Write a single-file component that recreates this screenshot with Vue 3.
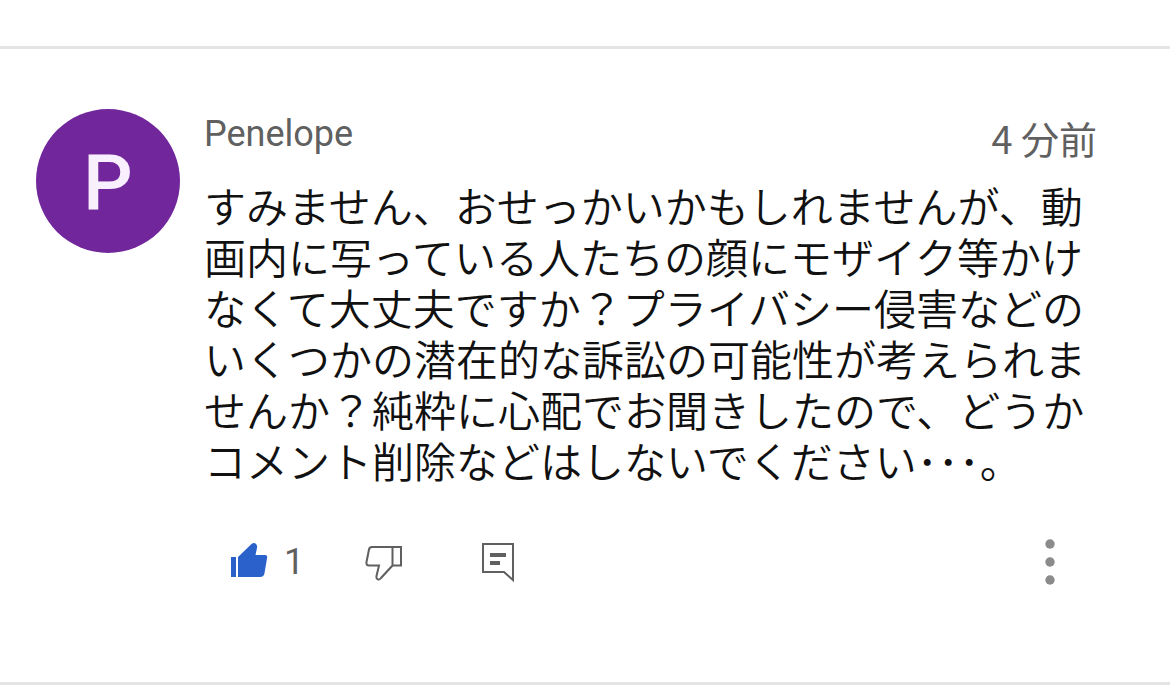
<script setup>
import { ref } from 'vue'

const liked = ref(true)
const comment = {
  author: 'Penelope',
  time: '4 分前',
  likes: 1,
  text: [
    'すみません、おせっかいかもしれませんが、動',
    '画内に写っている人たちの顔にモザイク等かけ',
    'なくて大丈夫ですか？プライバシー侵害などの',
    'いくつかの潜在的な訴訟の可能性が考えられま',
    'せんか？純粋に心配でお聞きしたので、どうか',
    'コメント削除などはしないでください･･･。',
  ].join('\n'),
}
</script>

<template>
  <main class="page">
    <article class="comment">
      <div class="avatar" aria-hidden="true">{{ comment.author[0] }}</div>
      <div class="content">
        <header class="head">
          <span class="author">{{ comment.author }}</span>
          <time class="time">{{ comment.time }}</time>
        </header>
        <p class="text">{{ comment.text }}</p>
        <div class="actions">
          <button class="btn like" type="button" aria-label="高く評価" :aria-pressed="liked" @click="liked = !liked">
            <svg width="38" height="38" viewBox="0 0 38 38" fill="#2a61cb">
              <path d="M1 14h5v20H1zM8 14L21 1.500Q24 -1 26 1Q27.500 2.500 27 5L25.500 12H35Q38 12 37 15.500L34.500 30Q34 34 30 34H8z" />
            </svg>
            <span class="count">{{ comment.likes }}</span>
          </button>
          <button class="btn dislike" type="button" aria-label="低く評価">
            <svg width="38" height="38" viewBox="0 0 38 38" fill="none" stroke="#606060" stroke-width="2">
              <path d="M27.500 4H7Q4.500 4 4 6.500L1.500 19Q1 22.500 4 22.500H14L11.500 33Q11 36 13 36.500Q14.500 37 16 35L27.500 22.500zM27.500 4H36V22.500H27.500" />
            </svg>
          </button>
          <button class="btn reply" type="button" aria-label="返信">
            <svg width="34" height="40" viewBox="0 0 34 40" fill="none" stroke="#606060" stroke-width="2">
              <path d="M2 2H32V38L23 30H2z" />
              <path d="M9 13H25M9 21H19" stroke-width="4" />
            </svg>
          </button>
          <button class="btn more" type="button" aria-label="その他">
            <svg width="10" height="46" viewBox="0 0 10 46" fill="#8b8b8b">
              <circle cx="5" cy="5" r="4.700" />
              <circle cx="5" cy="23" r="4.700" />
              <circle cx="5" cy="41" r="4.700" />
            </svg>
          </button>
        </div>
      </div>
    </article>
  </main>
</template>

<style scoped>
.page {
  padding-top: 46px;
  background: #fff;
  font-family: Roboto, "Noto Sans CJK JP", sans-serif;
}
.comment {
  display: flex;
  gap: 24px;
  padding: 60px 73px 97px 36px;
  border-top: 3px solid #e4e4e4;
  border-bottom: 3px solid #e4e4e4;
}
.avatar {
  display: flex;
  flex: none;
  align-items: center;
  justify-content: center;
  box-sizing: border-box;
  width: 144px;
  height: 144px;
  padding-top: 6px;
  border-radius: 50%;
  background: #71269b;
  color: #f8efff;
  font-size: 78px;
  font-weight: 500;
  line-height: 1;
}
.content {
  flex: 1;
  min-width: 0;
}
.head {
  display: flex;
  justify-content: space-between;
  height: 70px;
  color: #606060;
}
.author {
  font-size: 36px;
  line-height: 50px;
}
.time {
  font-family: "Noto Sans CJK JP", sans-serif;
  font-size: 38px;
  font-weight: 400;
  line-height: 58px;
}
.text {
  margin: 0;
  color: #111;
  font-family: "Noto Sans CJK JP", sans-serif;
  font-size: 42px;
  font-weight: 350;
  line-height: 51px;
  white-space: pre;
}
.actions {
  display: flex;
  align-items: center;
  height: 46px;
  margin-top: 54px;
  padding: 0 42px 0 26px;
}
.btn {
  display: flex;
  align-items: center;
  padding: 0;
  border: 0;
  background: none;
  color: #606060;
  font: inherit;
  cursor: pointer;
}
.like {
  gap: 16px;
}
.count {
  font-size: 36px;
  line-height: 48px;
}
.dislike {
  margin-left: 61px;
}
.reply {
  margin-left: 78px;
}
.more {
  margin-left: auto;
}
</style>

<style>
body {
  margin: 0;
  background: #fff;
}
</style>
